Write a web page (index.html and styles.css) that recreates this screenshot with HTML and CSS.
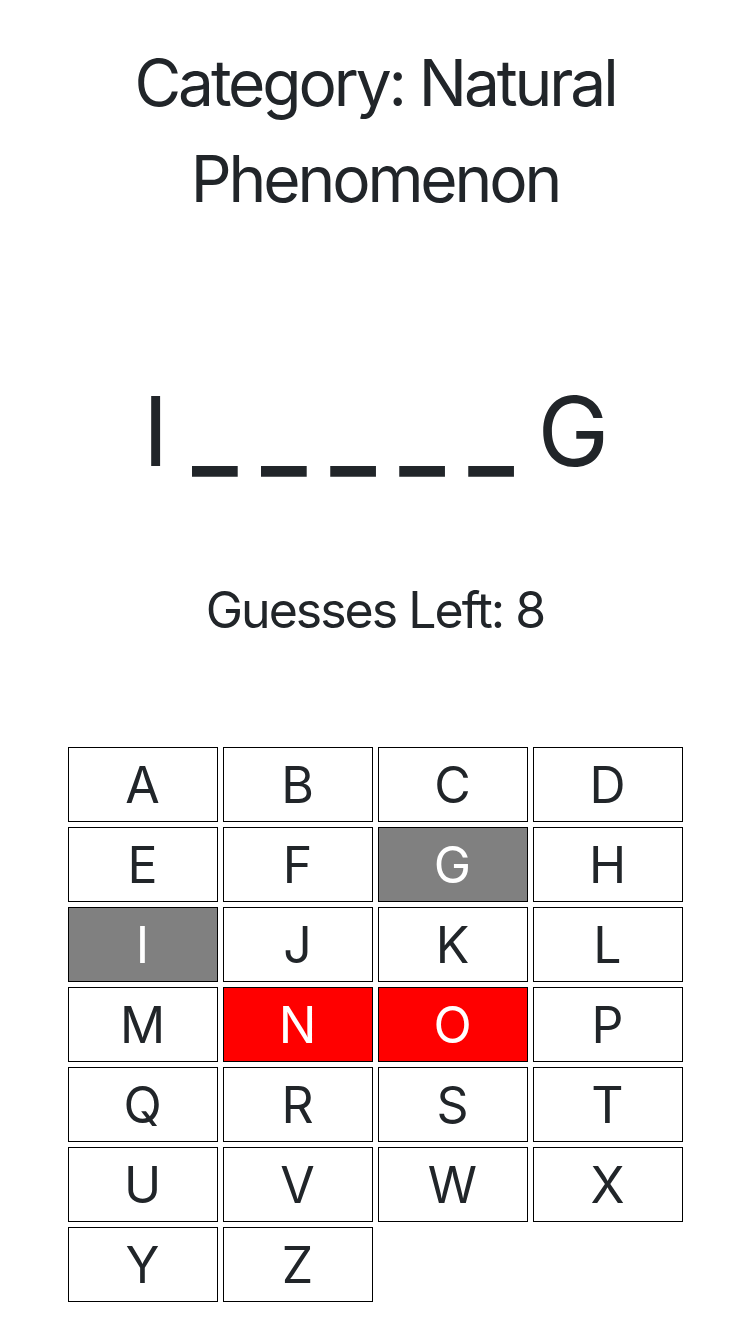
FILE: index.html
```html
<!DOCTYPE html>
<html lang="en">
<head>
<meta charset="utf-8">
<title>Hangman</title>
<link rel="stylesheet" href="styles.css">
</head>
<body>
<main class="game">
  <h1 class="category">Category: Natural Phenomenon</h1>
  <div class="word">I <span class="blank">_</span> <span class="blank">_</span> <span class="blank">_</span> <span class="blank">_</span> <span class="blank">_</span> G</div>
  <div class="guesses">Guesses Left: 8</div>
  <div class="keyboard">
    <button class="key">A</button>
    <button class="key">B</button>
    <button class="key">C</button>
    <button class="key">D</button>
    <button class="key">E</button>
    <button class="key">F</button>
    <button class="key key-hit">G</button>
    <button class="key">H</button>
    <button class="key key-hit">I</button>
    <button class="key">J</button>
    <button class="key">K</button>
    <button class="key">L</button>
    <button class="key">M</button>
    <button class="key key-miss">N</button>
    <button class="key key-miss">O</button>
    <button class="key">P</button>
    <button class="key">Q</button>
    <button class="key">R</button>
    <button class="key">S</button>
    <button class="key">T</button>
    <button class="key">U</button>
    <button class="key">V</button>
    <button class="key">W</button>
    <button class="key">X</button>
    <button class="key">Y</button>
    <button class="key">Z</button>
  </div>
</main>
</body>
</html>
```
FILE: styles.css
```css
* { box-sizing: border-box; }
html, body {
  margin: 0;
  padding: 0;
  background: #ffffff;
}
body {
  font-family: Inter, "Noto Sans", "Liberation Sans", sans-serif;
  color: #212529;
}
.game {
  display: flex;
  flex-direction: column;
  align-items: center;
  text-align: center;
  padding-top: 35px;
}
.category {
  margin: 0;
  max-width: 640px;
  font-size: 64px;
  font-weight: 400;
  line-height: 96px;
  letter-spacing: -3.1px;
}
.word {
  margin-top: 132px;
  font-size: 96px;
  line-height: 144px;
  white-space: pre;
  letter-spacing: -1.8px;
}
.blank {
  font-weight: 700;
}
.guesses {
  margin-top: 77px;
  font-size: 50px;
  line-height: 60px;
  letter-spacing: -2px;
}
.keyboard {
  margin-top: 107px;
  display: grid;
  grid-template-columns: repeat(4, 150px);
  grid-auto-rows: 75px;
  gap: 5px;
}
.key {
  font-family: inherit;
  font-size: 50px;
  color: #212529;
  background: #ffffff;
  border: 1px solid #000000;
  border-radius: 0;
  padding: 0;
  margin: 0;
}
.key-hit {
  background: #808080;
  color: #ffffff;
}
.key-miss {
  background: #ff0000;
  color: #ffffff;
}
```
